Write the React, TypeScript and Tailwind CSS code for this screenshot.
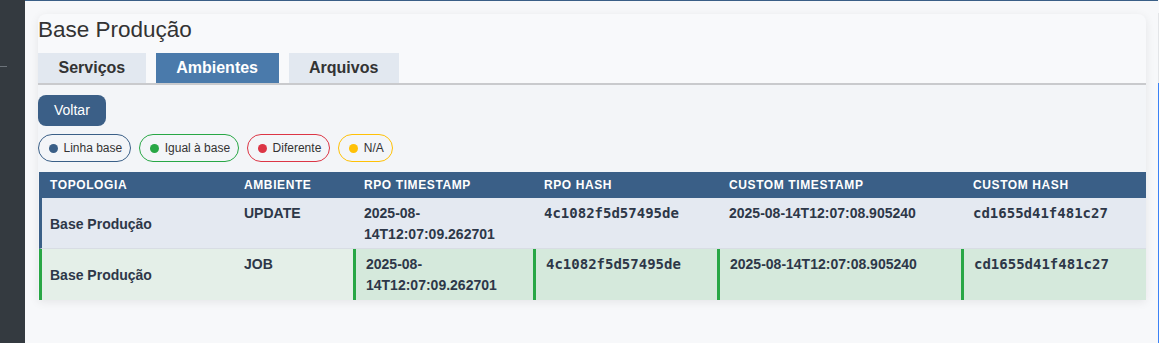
import React from 'react'

const legend = [
  { label: 'Linha base', border: 'border-[#3a5f87]', dot: 'bg-[#3a5f87]' },
  { label: 'Igual à base', border: 'border-[#28a745]', dot: 'bg-[#28a745]' },
  { label: 'Diferente', border: 'border-[#dc3545]', dot: 'bg-[#dc3545]' },
  { label: 'N/A', border: 'border-[#ffc107]', dot: 'bg-[#ffc107]' },
]

const columns = ['Topologia', 'Ambiente', 'RPO Timestamp', 'RPO Hash', 'Custom Timestamp', 'Custom Hash']

const rows = [
  {
    topologia: 'Base Produção',
    ambiente: 'UPDATE',
    rpoTs: '2025-08-14T12:07:09.262701',
    rpoHash: '4c1082f5d57495de',
    customTs: '2025-08-14T12:07:08.905240',
    customHash: 'cd1655d41f481c27',
    baseline: true,
  },
  {
    topologia: 'Base Produção',
    ambiente: 'JOB',
    rpoTs: '2025-08-14T12:07:09.262701',
    rpoHash: '4c1082f5d57495de',
    customTs: '2025-08-14T12:07:08.905240',
    customHash: 'cd1655d41f481c27',
    baseline: false,
  },
]

const sans = "font-['Liberation_Sans',Arial,sans-serif]"
const mono = "font-['DejaVu_Sans_Mono',monospace]"

export default function App() {
  return (
    <div className={`flex h-[343px] w-[1159px] overflow-hidden bg-[#f7f8fa] ${sans}`}>
      {/* sidebar */}
      <div className="w-[25px] shrink-0 bg-[#343a40] pt-[66px]">
        <div className="h-px w-[7px] bg-[#6c737a]" />
      </div>

      <main className="flex-1 border-t border-[#3a5f87] pl-[13px] pt-[13px]">
        <div className="w-[1108px] rounded-t-lg bg-[#f8f9fb] shadow-[0_2px_10px_rgba(0,0,0,0.08)]">
          <h1 className="pt-[2px] text-[22.5px] leading-[27px] text-[#333]">Base Produção</h1>

          {/* tabs */}
          <div className="mt-[10px] flex gap-[10px] border-b-2 border-[#c9cacd]">
            <button className="h-[30px] bg-[#e2e8f0] px-[20.5px] text-[16px] font-bold text-[#333]">Serviços</button>
            <button className="h-[30px] bg-[#4a7aab] px-[20.5px] text-[16px] font-bold text-white">Ambientes</button>
            <button className="h-[30px] bg-[#e2e8f0] px-[20.5px] text-[16px] font-bold text-[#333]">Arquivos</button>
          </div>

          <div className="bg-[#f3f5f8] pt-[10px]">
            <button className="flex h-[31px] items-center rounded-lg bg-[#3b5f87] px-4 text-[14px] text-white">
              Voltar
            </button>

            {/* legend */}
            <div className="mt-[8px] flex gap-2">
              {legend.map((item) => (
                <span
                  key={item.label}
                  className={`flex h-[28px] items-center gap-[5.5px] rounded-full border pl-[10px] pr-[8px] text-[12px] text-[#333] ${item.border}`}
                >
                  <span className={`h-[9px] w-[9px] rounded-full ${item.dot}`} />
                  {item.label}
                </span>
              ))}
            </div>

            {/* table */}
            <table className="ml-px mt-[10px] w-[1107px] table-fixed border-separate border-spacing-0 text-[14px] text-[#2d3748]">
              <colgroup>
                <col className="w-[194px]" />
                <col className="w-[120px]" />
                <col className="w-[180px]" />
                <col className="w-[184px]" />
                <col className="w-[244px]" />
                <col className="w-[185px]" />
              </colgroup>
              <thead>
                <tr className="bg-[#3a5f87]">
                  {columns.map((c, i) => (
                    <th
                      key={c}
                      className={`py-[6px] text-left text-[12px] font-bold uppercase leading-[14px] tracking-wider text-white ${
                        i >= 4 ? 'px-[12px]' : 'px-[11px]'
                      }`}
                    >
                      {c}
                    </th>
                  ))}
                </tr>
              </thead>
              <tbody>
                {rows.map((r) => {
                  const first = r.baseline
                    ? 'border-l-[3px] border-[#3a5f87] bg-[#e4e9f1]'
                    : 'border-l-[3px] border-[#28a745] bg-[#e4efe8]'
                  const plain = r.baseline ? 'bg-[#e4e9f1]' : 'bg-[#e4efe8]'
                  const diff = r.baseline
                    ? 'bg-[#e4e9f1] pl-[11px]'
                    : 'border-l-[3px] border-[#28a745] bg-[#d5e9dc] pl-[10px]'
                  const rowPad = r.baseline ? 'pt-[5px] pb-[3px] border-b border-b-[#d8dde4]' : 'pt-[5px] pb-[4px]'
                  const cell = `align-top font-bold leading-[21px] ${rowPad}`
                  return (
                    <tr key={r.ambiente}>
                      <td className={`${first} ${rowPad} pl-[8px] pr-[11px] align-middle font-bold leading-[21px]`}>
                        {r.topologia}
                      </td>
                      <td className={`${plain} ${cell} px-[11px]`}>{r.ambiente}</td>
                      <td className={`${diff} ${cell} pr-[11px]`}>{r.rpoTs}</td>
                      <td className={`${diff} ${cell} pr-[11px] ${mono}`}>{r.rpoHash}</td>
                      <td className={`${diff} ${cell} pr-[11px]`}>
                        <span className={r.baseline ? 'pl-px' : ''}>{r.customTs}</span>
                      </td>
                      <td className={`${diff} ${cell} pr-[11px] ${mono}`}>
                        <span className={r.baseline ? 'pl-px' : ''}>{r.customHash}</span>
                      </td>
                    </tr>
                  )
                })}
              </tbody>
            </table>
          </div>
        </div>
      </main>

      {/* right edge strip */}
      <div className="flex w-px shrink-0 flex-col">
        <div className="h-[13px]" />
        <div className="h-[70px] bg-[#e3e5e8]" />
        <div className="flex-1 bg-[#3b82f6]" />
      </div>
    </div>
  )
}
